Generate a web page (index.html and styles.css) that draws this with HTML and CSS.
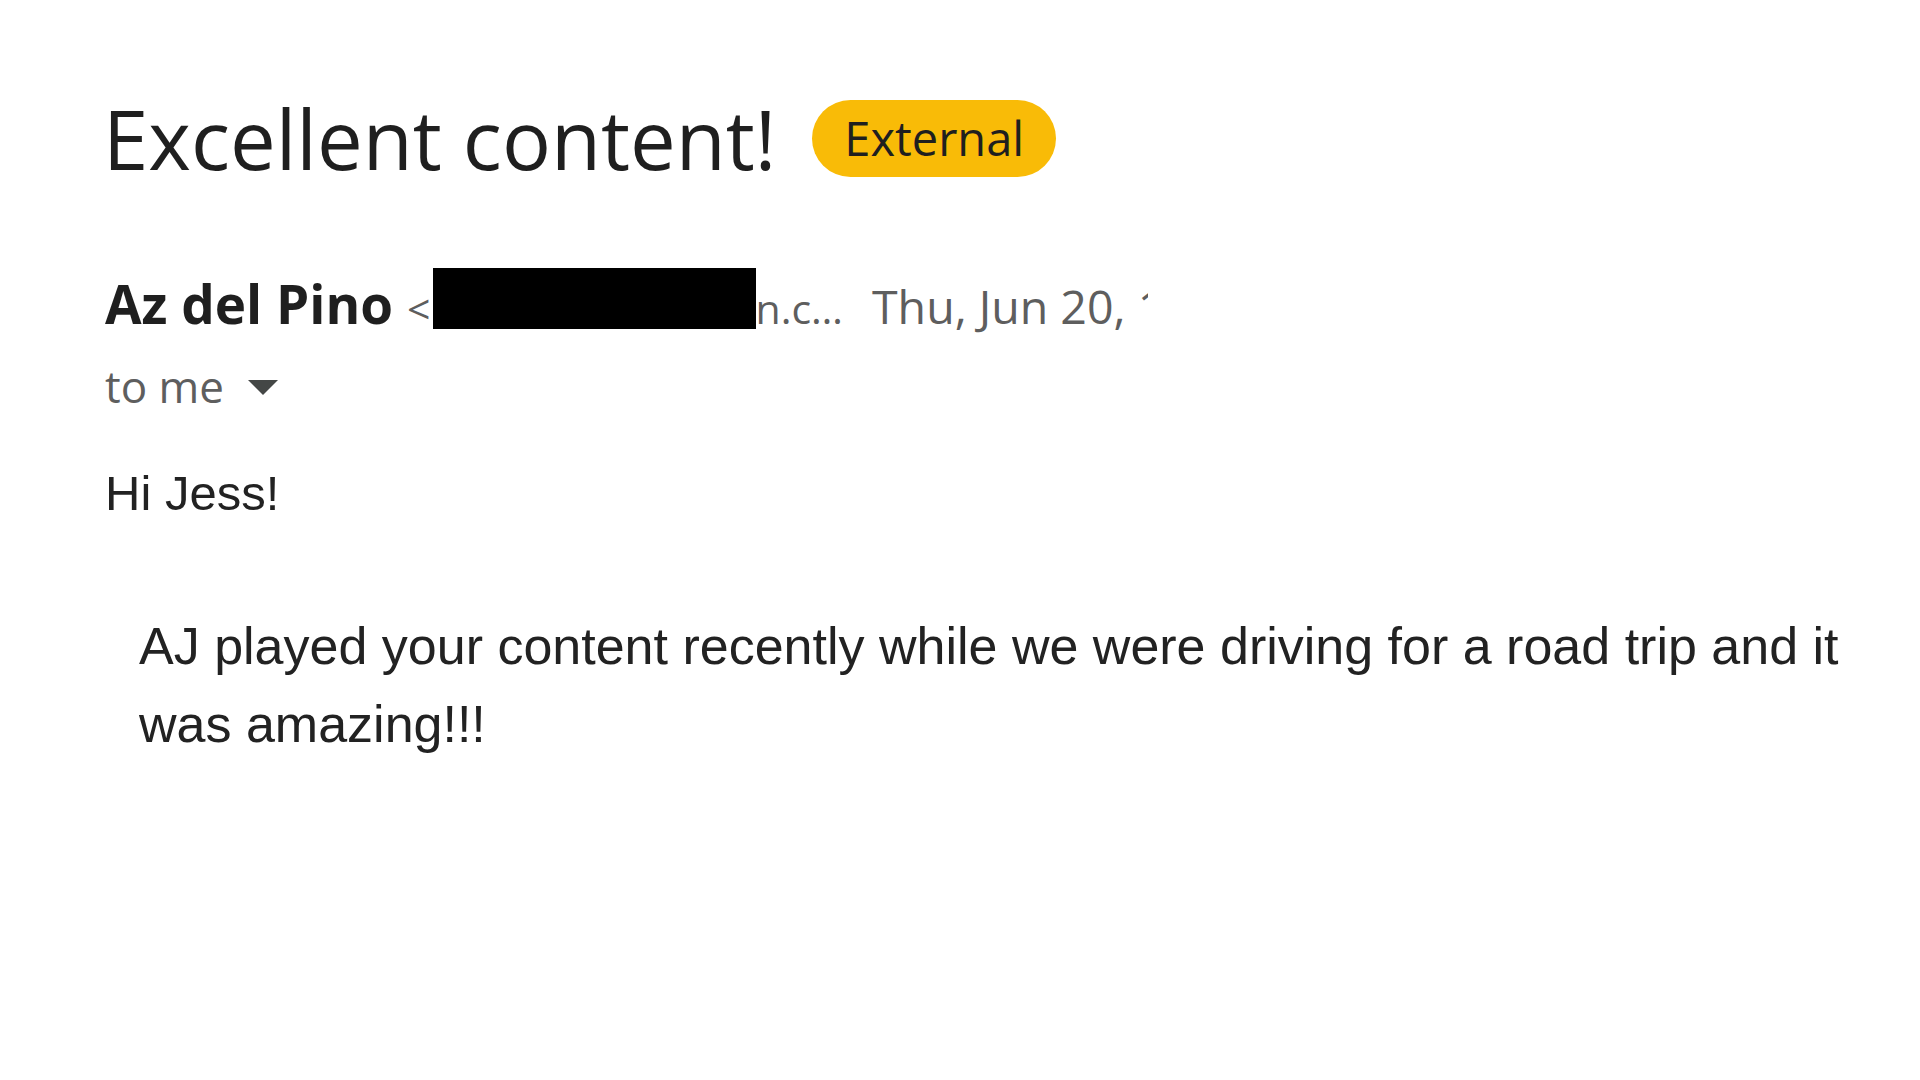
FILE: index.html
```html
<!DOCTYPE html>
<html lang="en">
<head>
<meta charset="utf-8">
<title>Excellent content!</title>
<link rel="stylesheet" href="styles.css">
</head>
<body>
<main class="mail">
  <div class="subject-row">
    <h1 class="subject">Excellent content!</h1>
    <span class="badge">External</span>
  </div>
  <div class="sender-row">
    <span class="sender-name">Az del Pino</span>
    <span class="sender-email">&lt;<span class="redact"></span>n.c…</span>
    <span class="date">Thu, Jun 20, 10:41 AM (2 days ago)</span>
  </div>
  <div class="to-row">
    <span class="to">to me</span>
    <svg class="caret" width="30" height="15" viewBox="0 0 30 15"><polygon points="0,0 30,0 15,15" fill="#444746"/></svg>
  </div>
  <div class="body">
    <p class="greeting">Hi Jess!</p>
    <p class="para">AJ played your content recently while we were driving for a road trip and it was amazing!!!</p>
  </div>
</main>
</body>
</html>
```
FILE: styles.css
```css
html, body {
  margin: 0;
  padding: 0;
  background: #ffffff;
}
.mail {
  padding: 100px 40px 0 105px;
  font-family: "Open Sans", "Liberation Sans", sans-serif;
  color: #1f1f1f;
}
.subject-row {
  display: flex;
  align-items: center;
  height: 77px;
}
.subject {
  margin: 0 0 0 -2px;
  font-size: 81.5px;
  font-weight: 400;
  line-height: 77px;
  color: #1f1f1f;
}
.badge {
  margin-left: 36px;
  height: 77px;
  padding: 0 32px;
  box-sizing: border-box;
  border-radius: 39px;
  background: #f9bb07;
  color: #1f1f1f;
  font-size: 47px;
  line-height: 77px;
  display: inline-flex;
  align-items: center;
}
.sender-row {
  margin-top: 91px;
  width: 1043px;
  overflow-x: clip;
  white-space: nowrap;
  display: flex;
  align-items: baseline;
  line-height: 72px;
}
.sender-name {
  font-size: 53px;
  font-weight: 700;
  color: #1f1f1f;
}
.sender-email {
  margin-left: 14px;
  font-size: 41px;
  color: #5e5e5e;
}
.redact {
  display: inline-block;
  width: 323px;
  height: 61px;
  background: #000;
  vertical-align: -5px;
  margin-left: 2px;
}
.date {
  margin-left: 29px;
  font-size: 46.5px;
  color: #5e5e5e;
}
.to-row {
  margin-top: 17px;
  height: 50px;
  display: flex;
  align-items: center;
}
.to {
  font-size: 44px;
  line-height: 50px;
  color: #5e5e5e;
}
.caret {
  margin-left: 24px;
  margin-top: 3px;
}
.body {
  font-family: "Liberation Sans", Arial, sans-serif;
  color: #222222;
}
.greeting {
  margin: 52px 0 0 0;
  font-size: 49px;
  line-height: 60px;
}
.para {
  margin: 84px 0 0 0;
  padding-left: 34px;
  font-size: 52px;
  line-height: 78px;
}
```
